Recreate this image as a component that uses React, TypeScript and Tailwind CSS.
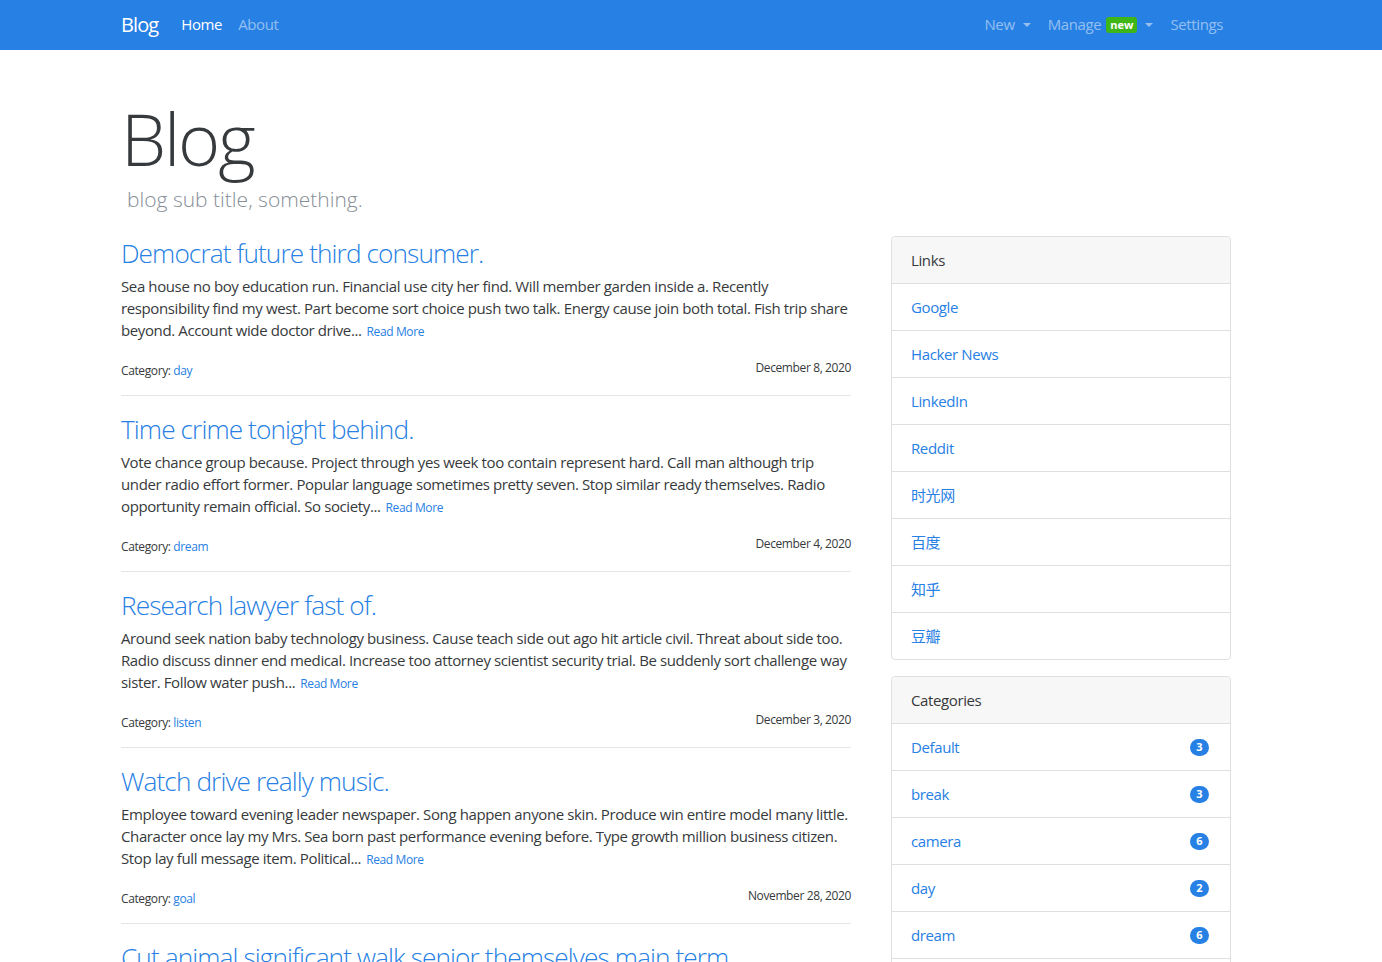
import React from 'react'

const posts = [
  {
    title: 'Democrat future third consumer.',
    lines: [
      'Sea house no boy education run. Financial use city her find. Will member garden inside a. Recently',
      'responsibility find my west. Part become sort choice push two talk. Energy cause join both total. Fish trip share',
      'beyond. Account wide doctor drive...',
    ],
    category: 'day',
    date: 'December 8, 2020',
  },
  {
    title: 'Time crime tonight behind.',
    lines: [
      'Vote chance group because. Project through yes week too contain represent hard. Call man although trip',
      'under radio effort former. Popular language sometimes pretty seven. Stop similar ready themselves. Radio',
      'opportunity remain official. So society...',
    ],
    category: 'dream',
    date: 'December 4, 2020',
  },
  {
    title: 'Research lawyer fast of.',
    lines: [
      'Around seek nation baby technology business. Cause teach side out ago hit article civil. Threat about side too.',
      'Radio discuss dinner end medical. Increase too attorney scientist security trial. Be suddenly sort challenge way',
      'sister. Follow water push...',
    ],
    category: 'listen',
    date: 'December 3, 2020',
  },
  {
    title: 'Watch drive really music.',
    lines: [
      'Employee toward evening leader newspaper. Song happen anyone skin. Produce win entire model many little.',
      'Character once lay my Mrs. Sea born past performance evening before. Type growth million business citizen.',
      'Stop lay full message item. Political...',
    ],
    category: 'goal',
    date: 'November 28, 2020',
  },
  {
    title: 'Cut animal significant walk senior themselves main term',
    lines: [
      'Table bring among fill. Rest movie street anyone network forward whether. Wonder hospital say worker.',
      'Ground hour between field. Course approach bed sign. Beat cultural never. Nice fact...',
    ],
    category: 'break',
    date: 'November 20, 2020',
  },
]

const links = ['Google', 'Hacker News', 'LinkedIn', 'Reddit', '时光网', '百度', '知乎', '豆瓣']

const categories = [
  { name: 'Default', count: 3 },
  { name: 'break', count: 3 },
  { name: 'camera', count: 6 },
  { name: 'day', count: 2 },
  { name: 'dream', count: 6 },
  { name: 'goal', count: 4 },
  { name: 'listen', count: 5 },
]

const Caret = () => (
  <span className="ml-[8px] inline-block h-0 w-0 border-x-[4.5px] border-t-[4.5px] border-x-transparent border-t-current align-middle" />
)

const Navbar = () => {
  return (
    <nav className="h-[50px] bg-[#2780e3]">
      <div className="ml-[121px] flex h-full w-[1110px] items-center pb-[1px] text-[15px]">
        <a className="mr-[23px] text-[20px] tracking-[-0.045em] text-white">Blog</a>
        <a className="text-white">Home</a>
        <a className="ml-[16px] text-white/50">About</a>
        <div className="ml-auto mr-[8px] flex items-center text-white/50">
          <a className="flex items-center">
            New
            <Caret />
          </a>
          <a className="ml-[17px] flex items-center">
            Manage
            <span className="ml-[5px] rounded-[3px] bg-[#3fb618] px-[4px] py-[1px] text-[11px] font-bold leading-[14px] tracking-normal text-white">new</span>
            <Caret />
          </a>
          <a className="ml-[17px]">Settings</a>
        </div>
      </div>
    </nav>
  )
}

const Post = ({ post }: { post: (typeof posts)[number] }) => (
  <article>
    <h3 className="mb-[6px] whitespace-nowrap text-[26.25px] font-light leading-[31px] tracking-[-0.035em] text-[#2780e3]">{post.title}</h3>
    <p className="mb-[16px] whitespace-nowrap text-[15px] leading-[22px] text-[#373a3c]">
      {post.lines.map((l, i) => (
        <React.Fragment key={i}>
          {l}
          {i < post.lines.length - 1 ? <br /> : <a className="ml-[5px] text-[12px] text-[#2780e3]">Read More</a>}
        </React.Fragment>
      ))}
    </p>
    <div className="flex items-start justify-between text-[12px] leading-[18px] text-[#373a3c]">
      <div className="pt-[3px]">
        Category: <a className="text-[#2780e3]">{post.category}</a>
      </div>
      <div>{post.date}</div>
    </div>
    <hr className="mt-[15px] mb-[18px] border-t border-[#e5e5e5]" />
  </article>
)

const Card = ({ title, children }: { title: string; children: React.ReactNode }) => (
  <div className="mb-[16px] rounded-[4px] border border-[#dfdfdf]">
    <div className="flex h-[46px] items-center rounded-t-[4px] bg-[#f7f7f7] px-[19px] text-[15px] text-[#373a3c]">{title}</div>
    <ul>{children}</ul>
  </div>
)

export default function App() {
  return (
    <div className="min-h-screen bg-white font-['Segoe_UI','Open_Sans','Noto_Sans_CJK_SC',sans-serif] tracking-[-0.024em] text-[#373a3c]">
      <Navbar />
      <div className="ml-[121px] w-[1110px]">
        <header className="pt-[45px] pb-[24px]">
          <h1 className="text-[72px] font-light leading-[86px] tracking-[-0.03em] text-[#373a3c]">Blog</h1>
          <p className="mt-[5px] ml-[6px] text-[21px] font-light leading-[26px] tracking-normal text-[#868e96]">blog sub title, something.</p>
        </header>
        <div className="flex gap-[40px]">
          <main className="w-[730px] pt-[2px]">
            {posts.map((p) => (
              <Post key={p.title} post={p} />
            ))}
          </main>
          <aside className="w-[340px]">
            <Card title="Links">
              {links.map((l) => (
                <li key={l} className="flex h-[47px] items-center border-t border-[#dfdfdf] px-[19px] text-[15px] text-[#2780e3]">
                  {l}
                </li>
              ))}
            </Card>
            <Card title="Categories">
              {categories.map((c) => (
                <li key={c.name} className="flex h-[47px] items-center justify-between border-t border-[#dfdfdf] pl-[19px] pr-[21px] text-[15px] text-[#2780e3]">
                  <span>{c.name}</span>
                  <span className="flex h-[17px] min-w-[19px] items-center justify-center rounded-full bg-[#2780e3] px-[6px] text-[11px] font-bold tracking-normal text-white">{c.count}</span>
                </li>
              ))}
            </Card>
          </aside>
        </div>
      </div>
    </div>
  )
}
